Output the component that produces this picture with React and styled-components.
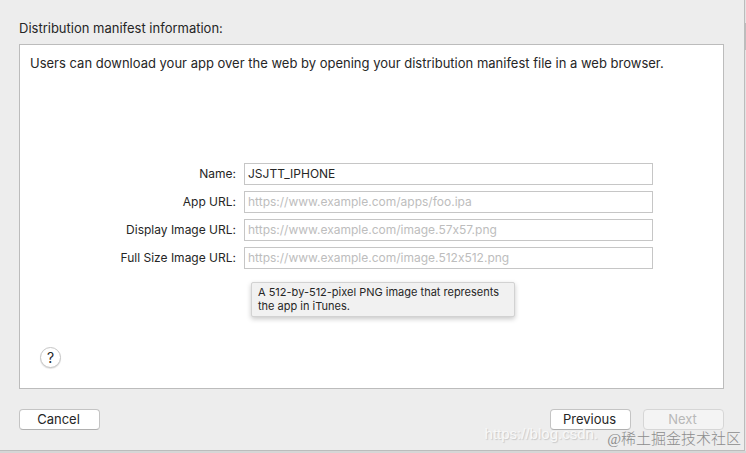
import { useState } from 'react';
import styled, { createGlobalStyle } from 'styled-components';

const fields = [
  { id: 'name', label: 'Name:' },
  { id: 'appUrl', label: 'App URL:', placeholder: 'https://www.example.com/apps/foo.ipa' },
  { id: 'displayImage', label: 'Display Image URL:', placeholder: 'https://www.example.com/image.57x57.png' },
  {
    id: 'fullSizeImage',
    label: 'Full Size Image URL:',
    placeholder: 'https://www.example.com/image.512x512.png',
    hint: 'A 512-by-512-pixel PNG image that represents the app in iTunes.',
  },
];

export default function App() {
  const [values, setValues] = useState({ name: 'JSJTT_IPHONE' });

  function handleChange(event) {
    setValues({ ...values, [event.target.name]: event.target.value });
  }

  return (
    <Desktop>
      <GlobalStyle />
      <Sheet>
        <Heading>Distribution manifest information:</Heading>

        <Panel>
          <Intro>
            Users can download your app over the web by opening your distribution manifest file in a web browser.
          </Intro>

          <Form>
            {fields.map((field) => (
              <Field key={field.id}>
                <Label htmlFor={field.id}>{field.label}</Label>
                <Input
                  id={field.id}
                  name={field.id}
                  type="text"
                  placeholder={field.placeholder}
                  value={values[field.id] || ''}
                  onChange={handleChange}
                />
                {field.hint && <Tooltip role="tooltip">{field.hint}</Tooltip>}
              </Field>
            ))}
          </Form>

          <HelpButton type="button" aria-label="Help">
            ?
          </HelpButton>
        </Panel>

        <Footer>
          <Button type="button">Cancel</Button>
          <Actions>
            <Button type="button">Previous</Button>
            <Button type="button" disabled>
              Next
            </Button>
          </Actions>
        </Footer>
      </Sheet>
      <Scroller />
      <BlogMark>https://blog.csdn.</BlogMark>
      <SiteMark>@稀土掘金技术社区</SiteMark>
    </Desktop>
  );
}

const GlobalStyle = createGlobalStyle`
  * {
    box-sizing: border-box;
  }

  body {
    margin: 0;
    background: #d6d6d6;
    font-family: Inter, 'Noto Sans CJK SC', sans-serif;
    font-feature-settings: 'calt' 0;
    font-size: 12px;
    color: #262626;
  }
`;

const Desktop = styled.div`
  position: relative;
  display: flex;
  min-height: 100vh;
  padding-bottom: 2px;
`;

const Sheet = styled.main`
  flex: 1;
  display: flex;
  flex-direction: column;
  padding: 20px 20px 20px 19px;
  background: #ededed;
  border-right: 1px solid #bcbcbc;
  border-bottom: 1px solid #bcbcbc;
`;

const Scroller = styled.div`
  width: 1px;
  background: linear-gradient(#e4e4e4 23px, #bdbdbd 23px, #bdbdbd 50px, #e4e4e4 50px);
`;

const Heading = styled.h1`
  margin: 0 0 8px;
  font-size: 13px;
  font-weight: 400;
  line-height: 16px;
`;

const Panel = styled.section`
  flex: 1;
  display: flex;
  flex-direction: column;
  padding: 10px 10px 20px;
  background: #fff;
  border: 1px solid #bcbcbc;
`;

const Intro = styled.p`
  margin: 0;
  font-size: 13px;
  line-height: 16px;
`;

const Form = styled.form`
  display: grid;
  gap: 6px;
  margin: 92px 60px 0 0;
`;

const Field = styled.div`
  position: relative;
  display: grid;
  grid-template-columns: 206px 1fr;
  column-gap: 8px;
  align-items: center;
`;

const Label = styled.label`
  padding-bottom: 1px;
  text-align: right;
`;

const Input = styled.input`
  width: 100%;
  height: 22px;
  padding: 0 3px 1px;
  background: #fff;
  border: 1px solid #c6c6c6;
  border-radius: 0;
  outline: none;
  font: inherit;
  font-feature-settings: inherit;
  color: inherit;

  &::placeholder {
    color: #bdbdbd;
    opacity: 1;
  }
`;

const Tooltip = styled.div`
  position: absolute;
  top: 35px;
  left: 221px;
  width: 264px;
  padding: 2px 6px 3px;
  background: #f1f1f1;
  border: 1px solid #d2d2d2;
  border-radius: 2px;
  box-shadow: 0 2px 5px rgba(0, 0, 0, 0.22);
  font-size: 11px;
  line-height: 14px;
`;

const HelpButton = styled.button`
  width: 21px;
  height: 21px;
  margin: auto 0 0 10px;
  padding: 0;
  background: #fff;
  border: 1px solid #c6c6c6;
  border-radius: 50%;
  box-shadow: 0 1px 1px rgba(0, 0, 0, 0.12);
  font: inherit;
  font-size: 14px;
  color: inherit;
`;

const Footer = styled.footer`
  display: flex;
  justify-content: space-between;
  margin-top: 20px;
`;

const Actions = styled.div`
  display: flex;
  gap: 12px;
`;

const Button = styled.button`
  width: 81px;
  height: 21px;
  padding: 0 2px 1px 0;
  background: #fff;
  border: 1px solid #c4c4c4;
  border-bottom-color: #b0b0b0;
  border-radius: 4px;
  font: inherit;
  font-size: 13px;
  line-height: 16px;
  color: inherit;

  &:disabled {
    background: #f4f4f4;
    border-color: #d6d6d6;
    color: #b8b8b8;
  }
`;

const Watermark = styled.span`
  position: absolute;
  white-space: nowrap;
  pointer-events: none;
`;

const BlogMark = styled(Watermark)`
  right: 148px;
  bottom: 11px;
  font-family: 'Liberation Sans', sans-serif;
  font-size: 15px;
  line-height: 16px;
  color: #f8f8f8;
  text-shadow: 1px 1px 1px #c8c8c8;
`;

const SiteMark = styled(Watermark)`
  right: 5px;
  bottom: 4px;
  font-family: 'Liberation Serif', 'Noto Sans CJK SC', serif;
  font-size: 15px;
  font-weight: 300;
  line-height: 20px;
  color: #8c8c8c;
`;
